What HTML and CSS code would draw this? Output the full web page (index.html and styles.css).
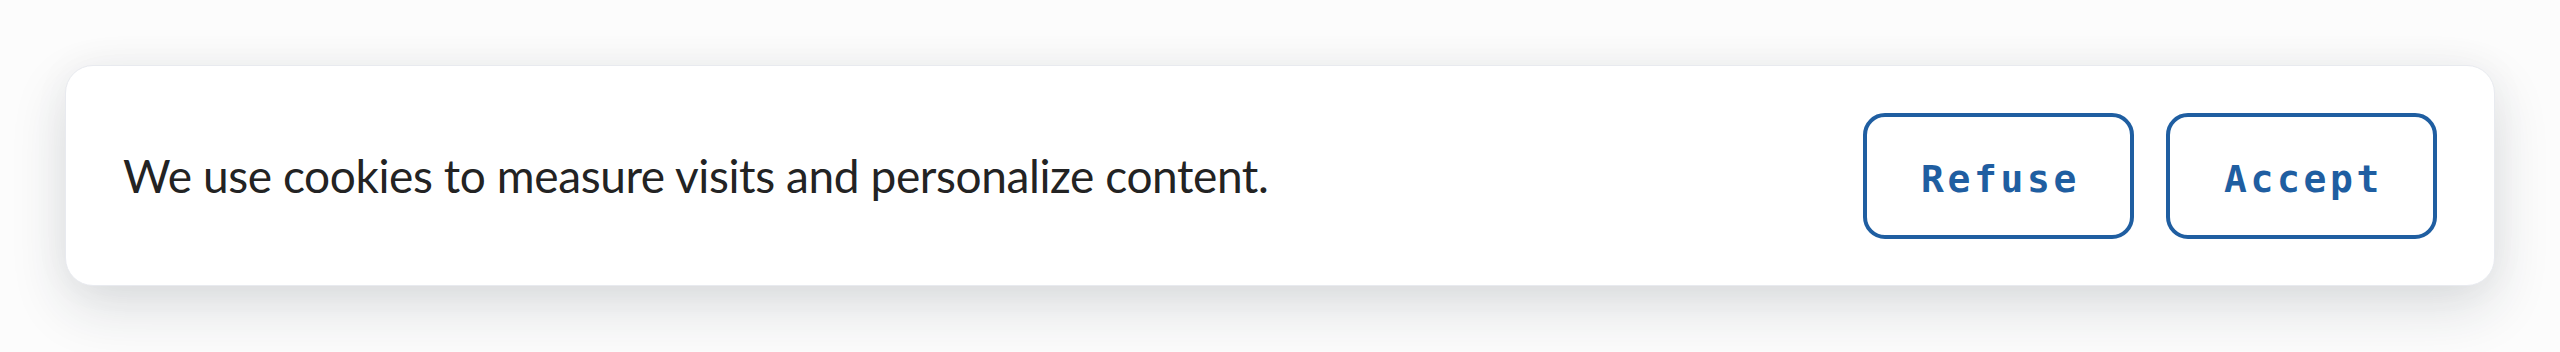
FILE: index.html
```html
<!DOCTYPE html>
<html lang="en">
<head>
<meta charset="utf-8">
<title>Cookie banner</title>
<link rel="stylesheet" href="styles.css">
</head>
<body>
<div class="page">
  <div class="banner">
    <p class="message">We use cookies to measure visits and personalize content.</p>
    <div class="actions">
      <button class="btn">Refuse</button>
      <button class="btn">Accept</button>
    </div>
  </div>
</div>
</body>
</html>
```
FILE: styles.css
```css
html, body {
  margin: 0;
  padding: 0;
  background: #fcfcfc;
}
.page {
  padding: 65px 65px 66px 65px;
}
.banner {
  box-sizing: border-box;
  height: 221px;
  display: flex;
  align-items: center;
  justify-content: space-between;
  padding: 0 57px 0 57px;
  background: #ffffff;
  border: 1px solid #e8eaef;
  border-radius: 28px;
  box-shadow: 0 22px 56px rgba(30, 40, 60, 0.14), 0 0 40px rgba(30, 40, 60, 0.04);
}
.message {
  margin: 0;
  font-family: Lato, "Noto Sans", sans-serif;
  font-size: 46px;
  color: #232323;
  letter-spacing: -0.4px;
}
.actions {
  display: flex;
  gap: 32px;
}
.btn {
  box-sizing: border-box;
  width: 271px;
  height: 126px;
  background: #ffffff;
  border: 4px solid #1f5ea1;
  border-radius: 22px;
  color: #1f5ea1;
  font-family: "DejaVu Sans Mono", "Liberation Mono", monospace;
  font-weight: 700;
  font-size: 38px;
  letter-spacing: 3.6px;
  padding: 6px 0 0 4px;
}
```
